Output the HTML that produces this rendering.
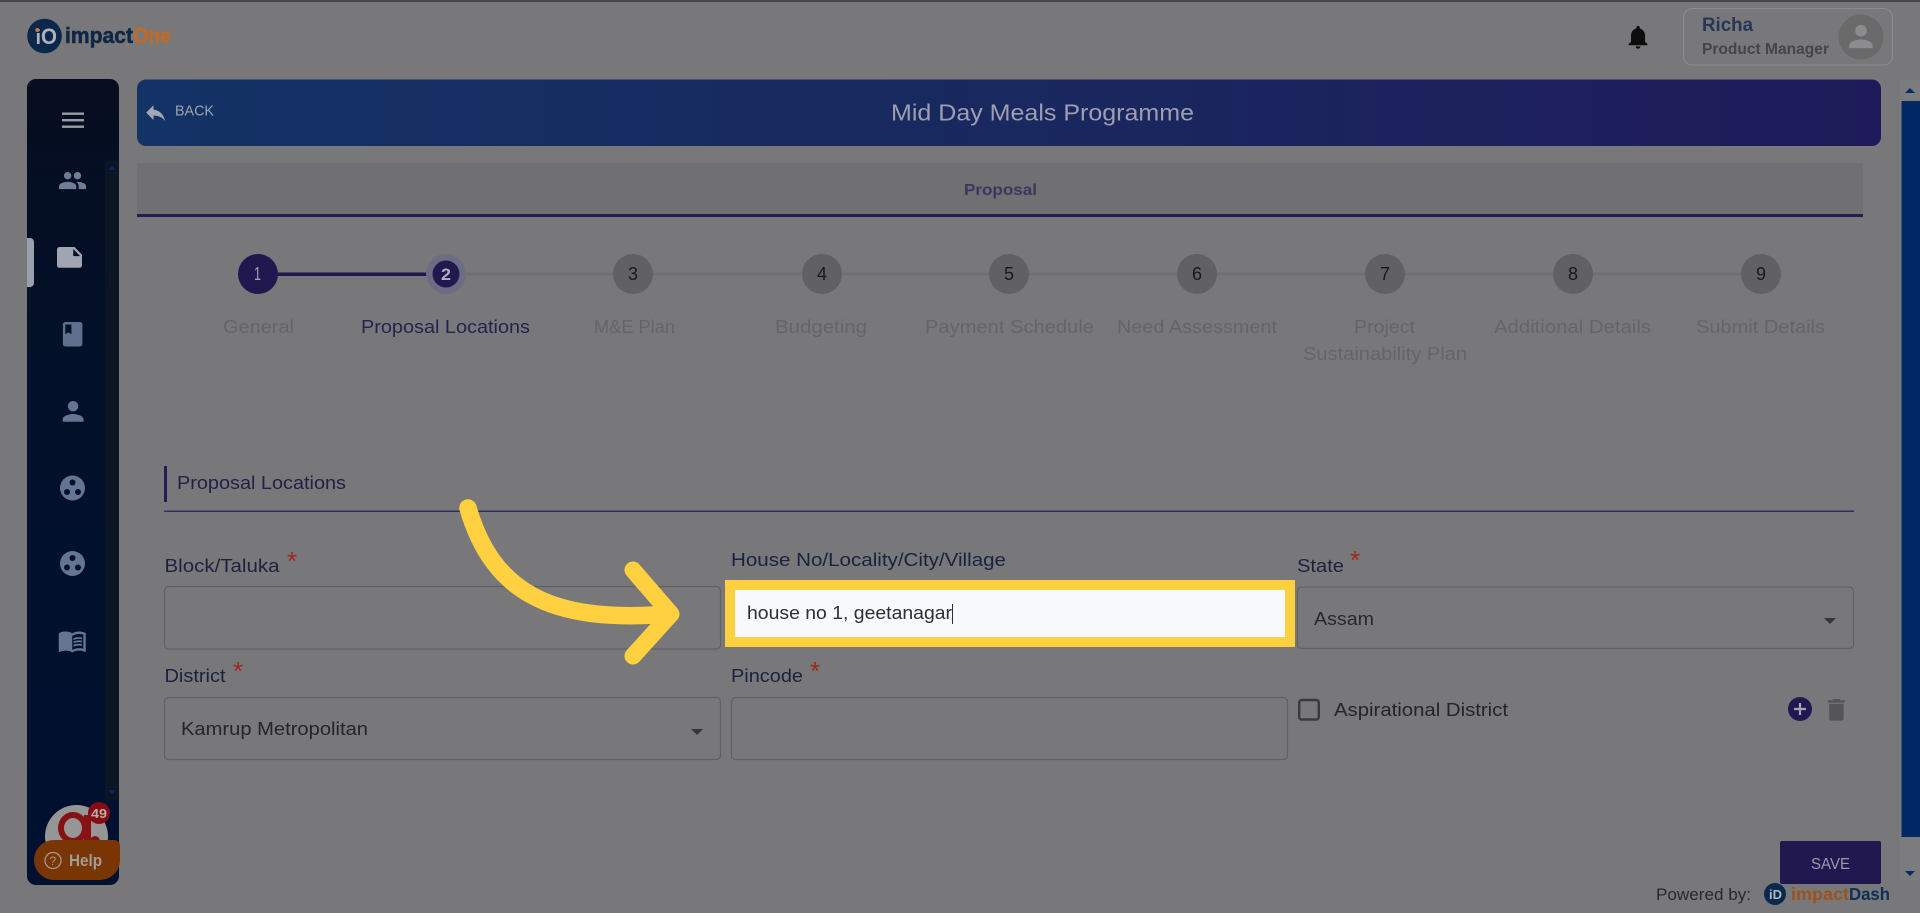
<!DOCTYPE html>
<html lang="en">
<head>
<meta charset="utf-8">
<title>Mid Day Meals Programme</title>
<style>
html,body{margin:0;padding:0;width:1920px;height:913px;overflow:hidden;background:#78787a}
svg{display:block;position:absolute;left:0;top:0}
text{font-family:"Liberation Sans",sans-serif}
</style>
</head>
<body>
<svg width="1920" height="913" viewBox="0 0 1920 913" xmlns="http://www.w3.org/2000/svg">
<defs>
<linearGradient id="ban" x1="0" x2="1" y1="0" y2="0"><stop offset="0" stop-color="#133265"/><stop offset=".5" stop-color="#19285f"/><stop offset="1" stop-color="#1f1b5a"/></linearGradient>
<linearGradient id="side" x1="0" x2="0" y1="0" y2="1"><stop offset="0" stop-color="#060e1f"/><stop offset=".35" stop-color="#021029"/><stop offset="1" stop-color="#001030"/></linearGradient>
<clipPath id="av"><circle cx="76.5" cy="837" r="31.5"/></clipPath>
</defs>

<rect width="1920" height="913" fill="#78787a"/>
<rect width="1920" height="2" fill="#48484c"/>

<!-- logo -->
<circle cx="44.500" cy="36" r="17.300" fill="#0b274b"/>
<text x="35.500" y="44" font-size="20" font-weight="700" fill="#aeb2b9">i</text>
<text x="41" y="44" font-size="22" font-weight="700" fill="#aeb2b9" textLength="16" lengthAdjust="spacingAndGlyphs">O</text>
<circle cx="37.300" cy="30" r="2" fill="#c8763f"/>
<text x="65" y="43" font-size="22" font-weight="700" fill="#0f2745" stroke="#0f2745" stroke-width=".5" textLength="68" lengthAdjust="spacingAndGlyphs">impact</text>
<text x="133" y="43" font-size="22" font-weight="700" fill="#bd6a2a" stroke="#bd6a2a" stroke-width=".6" textLength="38" lengthAdjust="spacingAndGlyphs">One</text>

<!-- bell -->
<path transform="translate(1624 23) scale(1.17)" fill="#0c0c0d" d="M12 22c1.1 0 2-.9 2-2h-4c0 1.1.89 2 2 2zm6-6v-5c0-3.07-1.64-5.64-4.5-6.32V4c0-.83-.67-1.5-1.5-1.5s-1.5.67-1.5 1.5v.68C7.63 5.36 6 7.92 6 11v5l-2 2v1h16v-1l-2-2z"/>

<!-- user box -->
<rect x="1683.500" y="8.500" width="209" height="56.500" rx="9" fill="none" stroke="#8c8c8e"/>
<text x="1702" y="31" font-size="19" font-weight="700" fill="#263655" textLength="51" lengthAdjust="spacingAndGlyphs">Richa</text>
<text x="1702" y="54" font-size="15.500" font-weight="700" fill="#454549" textLength="127" lengthAdjust="spacingAndGlyphs">Product Manager</text>
<circle cx="1861" cy="37" r="22.500" fill="#6a6a6b"/>
<path transform="translate(1843.600 19.100) scale(1.45)" fill="#8d8d8f" d="M12 12c2.210 0 4-1.790 4-4s-1.790-4-4-4-4 1.790-4 4 1.790 4 4 4zm0 2c-2.670 0-8 1.340-8 4v2h16v-2c0-2.660-5.330-4-8-4z"/>

<!-- sidebar -->
<rect x="27" y="79" width="92" height="806" rx="9" fill="url(#side)"/>
<rect x="105" y="161" width="14" height="639" fill="#0c1524"/>
<path d="M112 166l-3.500 4h7z" fill="#042a6e"/>
<path d="M112 794l-3.500-4h7z" fill="#042a6e"/>
<path d="M27 238h3a4 4 0 0 1 4 4v41a4 4 0 0 1-4 4h-3z" fill="#9a9fab"/>
<g fill="#9a9da5"><rect x="62" y="112.500" width="22" height="2.400"/><rect x="62" y="119" width="22" height="2.400"/><rect x="62" y="125.500" width="22" height="2.400"/></g>
<path transform="translate(57.800 165.800) scale(1.23)" fill="#6f7d96" d="M16 11c1.660 0 2.990-1.340 2.990-3S17.660 5 16 5c-1.660 0-3 1.340-3 3s1.340 3 3 3zm-8 0c1.660 0 2.990-1.340 2.990-3S9.660 5 8 5C6.340 5 5 6.340 5 8s1.340 3 3 3zm0 2c-2.330 0-7 1.170-7 3.500V19h14v-2.500c0-2.330-4.670-3.500-7-3.500zm8 0c-.29 0-.62.02-.97.05 1.160.84 1.970 1.970 1.970 3.450V19h6v-2.500c0-2.330-4.670-3.500-7-3.500z"/>
<path transform="translate(54.500 241.800) scale(1.25 1.3)" fill="#9fa5b3" d="M22 10l-6-6H4c-1.100 0-2 .9-2 2v12.010c0 1.100.9 1.990 2 1.990l16-.01c1.100 0 2-.89 2-1.990v-8zm-7-4.500 5.500 5.500H15V5.500z"/>
<path transform="translate(58 319.600) scale(1.22)" fill="#5f708e" d="M18 2H6c-1.100 0-2 .9-2 2v16c0 1.100.9 2 2 2h12c1.100 0 2-.9 2-2V4c0-1.100-.9-2-2-2zM6 4h5v8l-2.500-1.500L6 12V4z"/>
<path transform="translate(57.500 395.800) scale(1.3)" fill="#647591" d="M12 12c2.210 0 4-1.790 4-4s-1.790-4-4-4-4 1.790-4 4 1.790 4 4 4zm0 2c-2.670 0-8 1.340-8 4v2h16v-2c0-2.660-5.330-4-8-4z"/>
<g>
<circle cx="72.500" cy="488" r="12.500" fill="#647591"/><circle cx="72.500" cy="482.500" r="3" fill="#011030"/><circle cx="67" cy="492" r="3" fill="#011030"/><circle cx="78" cy="492" r="3" fill="#011030"/>
<circle cx="72.500" cy="563.500" r="12.500" fill="#647591"/><circle cx="72.500" cy="558" r="3" fill="#011030"/><circle cx="67" cy="567.500" r="3" fill="#011030"/><circle cx="78" cy="567.500" r="3" fill="#011030"/>
</g>
<g transform="translate(57.500 626) scale(1.23)" fill="#647591">
<path d="M21 5c-1.110-.35-2.330-.5-3.500-.5-1.950 0-4.050.4-5.500 1.500-1.450-1.100-3.550-1.500-5.500-1.500S2.450 4.900 1 6v14.650c0 .25.25.5.5.5.1 0 .15-.05.25-.05C3.100 20.450 5.050 20 6.500 20c1.950 0 4.050.4 5.500 1.500 1.350-.85 3.800-1.500 5.500-1.500 1.650 0 3.350.3 4.750 1.050.1.05.15.05.25.05.25 0 .5-.25.5-.5V6c-.6-.45-1.250-.75-2-1zm0 13.500c-1.100-.35-2.300-.5-3.500-.5-1.700 0-4.150.65-5.500 1.500V8c1.350-.85 3.800-1.500 5.500-1.500 1.200 0 2.400.15 3.500.5v11.500z"/>
<path d="M17.500 10.500c.88 0 1.730.09 2.500.26V9.240c-.79-.15-1.640-.24-2.500-.24-1.700 0-3.240.29-4.500.83v1.660c1.130-.64 2.700-.99 4.500-.99zM13 12.490v1.660c1.130-.64 2.700-.99 4.500-.99.88 0 1.730.09 2.500.26V11.900c-.79-.15-1.640-.24-2.500-.24-1.700 0-3.240.3-4.500.83zM17.500 14.330c-1.700 0-3.240.29-4.500.83v1.660c1.130-.64 2.700-.99 4.500-.99.88 0 1.730.09 2.500.26v-1.520c-.79-.16-1.640-.24-2.500-.24z"/>
</g>

<!-- avatar + help -->
<circle cx="76.500" cy="836.500" r="31.500" fill="#969697"/>
<g clip-path="url(#av)">
<ellipse cx="73" cy="828" rx="12" ry="13" fill="none" stroke="#861216" stroke-width="6"/>
<rect x="84" y="815" width="7" height="30" fill="#861216"/>
<circle cx="95" cy="841" r="5" fill="#861216"/>
</g>
<circle cx="99" cy="813" r="11" fill="#850c12"/>
<text x="91" y="818" font-size="13" font-weight="700" fill="#b6adad" textLength="16" lengthAdjust="spacingAndGlyphs">49</text>
<path d="M54 840H114a6 6 0 0 1 6 6v14a20 20 0 0 1-20 20H54a20 20 0 0 1 0-40z" fill="#793604"/>
<circle cx="53" cy="860.500" r="8" fill="none" stroke="#a69a8f" stroke-width="1.300"/>
<text x="49.500" y="865" font-size="12" fill="#a69a8f">?</text>
<text x="69" y="866" font-size="17" font-weight="700" fill="#a29c96" textLength="33" lengthAdjust="spacingAndGlyphs">Help</text>

<!-- banner -->
<rect x="137" y="79.500" width="1744" height="66.500" rx="9" fill="url(#ban)"/>
<path transform="translate(143 100) scale(1.05)" fill="#a3a8b4" d="M10 9V5l-7 7 7 7v-4.100c5 0 8.500 1.600 11 5.100-1-5-4-10-11-11z"/>
<text x="175" y="115.500" font-size="14.500" fill="#9fa3af" textLength="39" lengthAdjust="spacingAndGlyphs">BACK</text>
<text x="891" y="120.500" font-size="23.500" fill="#9e9eb0" textLength="303" lengthAdjust="spacingAndGlyphs">Mid Day Meals Programme</text>

<!-- tab bar -->
<rect x="137" y="163" width="1726" height="51" fill="#707072"/>
<rect x="137" y="214" width="1726" height="3" fill="#251c5a"/>
<text x="964" y="195" font-size="16" font-weight="700" fill="#3a3660" textLength="73" lengthAdjust="spacingAndGlyphs">Proposal</text>

<!-- stepper -->
<rect x="466" y="272.500" width="1295" height="3" fill="#6f6f71"/>
<rect x="278" y="272.500" width="150" height="3.500" fill="#21184f"/>
<circle cx="258" cy="274" r="20" fill="#20184f"/>
<text x="254" y="280" font-size="18" fill="#a4a1b6" textLength="7" lengthAdjust="spacingAndGlyphs">1</text>
<circle cx="446" cy="274" r="20" fill="#6c6c82"/>
<circle cx="446" cy="274" r="13.500" fill="#20184f"/>
<text x="441" y="280" font-size="17" font-weight="700" fill="#b1aec2" textLength="10" lengthAdjust="spacingAndGlyphs">2</text>
<g fill="#616163">
<circle cx="633" cy="274" r="20"/><circle cx="822" cy="274" r="20"/><circle cx="1009" cy="274" r="20"/><circle cx="1197" cy="274" r="20"/><circle cx="1385" cy="274" r="20"/><circle cx="1573" cy="274" r="20"/><circle cx="1761" cy="274" r="20"/>
</g>
<g font-size="18" fill="#19191b" text-anchor="middle">
<text x="633" y="280">3</text><text x="822" y="280">4</text><text x="1009" y="280">5</text><text x="1197" y="280">6</text><text x="1385" y="280">7</text><text x="1573" y="280">8</text><text x="1761" y="280">9</text>
</g>
<g font-size="18.500" fill="#656567">
<text x="223" y="333" textLength="71" lengthAdjust="spacingAndGlyphs">General</text>
<text x="594" y="333" textLength="81" lengthAdjust="spacingAndGlyphs">M&amp;E Plan</text>
<text x="775" y="333" textLength="92" lengthAdjust="spacingAndGlyphs">Budgeting</text>
<text x="925" y="333" textLength="169" lengthAdjust="spacingAndGlyphs">Payment Schedule</text>
<text x="1117" y="333" textLength="160" lengthAdjust="spacingAndGlyphs">Need Assessment</text>
<text x="1354" y="333" textLength="61" lengthAdjust="spacingAndGlyphs">Project</text>
<text x="1303" y="360" textLength="164" lengthAdjust="spacingAndGlyphs">Sustainability Plan</text>
<text x="1494" y="333" textLength="157" lengthAdjust="spacingAndGlyphs">Additional Details</text>
<text x="1696" y="333" textLength="129" lengthAdjust="spacingAndGlyphs">Submit Details</text>
</g>
<text x="361" y="333" font-size="18.500" fill="#24234c" textLength="169" lengthAdjust="spacingAndGlyphs">Proposal Locations</text>

<!-- section -->
<rect x="164" y="466" width="3" height="36" fill="#251c5a"/>
<text x="177" y="489" font-size="18.500" fill="#212145" textLength="169" lengthAdjust="spacingAndGlyphs">Proposal Locations</text>
<rect x="164" y="510.500" width="1690" height="1.500" fill="#312e57"/>

<!-- labels -->
<g font-size="18.500" fill="#1a2240">
<text x="164.500" y="572" textLength="115" lengthAdjust="spacingAndGlyphs">Block/Taluka</text>
<text x="731" y="566" textLength="275" lengthAdjust="spacingAndGlyphs">House No/Locality/City/Village</text>
<text x="1297" y="572" textLength="47" lengthAdjust="spacingAndGlyphs">State</text>
<text x="164.500" y="682" textLength="61" lengthAdjust="spacingAndGlyphs">District</text>
<text x="731" y="682" textLength="72" lengthAdjust="spacingAndGlyphs">Pincode</text>
</g>
<g font-size="26" fill="#9b2a1a" text-anchor="middle">
<text x="292" y="570">*</text><text x="1355" y="569">*</text><text x="238" y="680">*</text><text x="815" y="680">*</text>
</g>

<!-- inputs -->
<g fill="none" stroke="#616163" stroke-width="1.200">
<rect x="164.500" y="586.500" width="556" height="62.500" rx="4"/>
<rect x="1297.500" y="587" width="556" height="61.500" rx="4"/>
<rect x="164.500" y="697.500" width="556" height="62" rx="4"/>
<rect x="731.500" y="697.500" width="556" height="62" rx="4"/>
</g>
<text x="1314" y="625" font-size="18.500" fill="#29292b" textLength="60" lengthAdjust="spacingAndGlyphs">Assam</text>
<path d="M1824 618h12l-6 6z" fill="#363638"/>
<text x="181" y="735" font-size="18.500" fill="#252529" textLength="187" lengthAdjust="spacingAndGlyphs">Kamrup Metropolitan</text>
<path d="M691 729h12l-6 6z" fill="#363638"/>

<!-- highlighted input -->
<rect x="725" y="580" width="570" height="67" fill="#ffd040"/>
<rect x="735" y="590" width="550" height="47" fill="#f7f9fc"/>
<text x="747" y="619" font-size="18.500" fill="#2e2e33" textLength="205" lengthAdjust="spacingAndGlyphs">house no 1, geetanagar</text>
<rect x="952" y="604" width="1" height="20" fill="#2e2e33"/>

<!-- arrow -->
<g fill="none" stroke="#ffd040" stroke-linecap="round" stroke-linejoin="round">
<path stroke-width="17.500" d="M468 508C492 590 548 624 668 614"/>
<path stroke-width="17" d="M633 570L671 614 633 656"/>
</g>

<!-- checkbox -->
<rect x="1299.200" y="700" width="19.600" height="19.500" rx="2.500" fill="none" stroke="#3a3a3c" stroke-width="2.400"/>
<text x="1334" y="716" font-size="18.500" fill="#252529" textLength="174" lengthAdjust="spacingAndGlyphs">Aspirational District</text>

<!-- add / delete -->
<circle cx="1800" cy="709" r="12" fill="#20184f"/>
<path d="M1800 703v12M1794 709h12" stroke="#a8a4b8" stroke-width="2.200"/>
<path transform="translate(1822 695.400) scale(1.2)" fill="#555557" d="M6 19c0 1.100.9 2 2 2h8c1.100 0 2-.9 2-2V7H6v12zM19 4h-3.500l-1-1h-5l-1 1H5v2h14V4z"/>

<!-- scrollbar -->
<rect x="1900" y="80" width="20" height="800" fill="#7c7c7e"/>
<rect x="1901.500" y="101" width="18.500" height="736" fill="#012864"/>
<path d="M1910 88l-5 5h10z" fill="#042a6e"/>
<path d="M1910 876l-5-5h10z" fill="#042a6e"/>

<!-- save -->
<rect x="1780" y="841" width="101" height="43" rx="2" fill="#20184f"/>
<text x="1811" y="869" font-size="16" fill="#9b98ac" textLength="39" lengthAdjust="spacingAndGlyphs">SAVE</text>

<!-- powered by -->
<text x="1656" y="900" font-size="16.500" fill="#29292b" textLength="95" lengthAdjust="spacingAndGlyphs">Powered by:</text>
<circle cx="1775" cy="894" r="11" fill="#0a294e"/>
<text x="1769" y="899" font-size="13" font-weight="700" fill="#b3b6bc" textLength="13" lengthAdjust="spacingAndGlyphs">iD</text>
<text x="1791" y="900" font-size="17.500" font-weight="700" fill="#9a5220" textLength="58" lengthAdjust="spacingAndGlyphs">impact</text>
<text x="1849" y="900" font-size="17.500" font-weight="700" fill="#0e2f56" textLength="41" lengthAdjust="spacingAndGlyphs">Dash</text>
</svg>
</body>
</html>
